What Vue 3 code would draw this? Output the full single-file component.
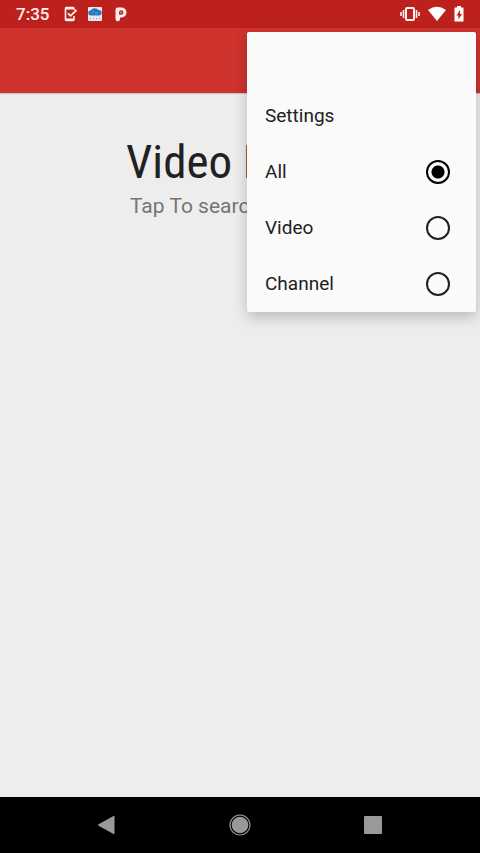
<script setup>
import { ref } from 'vue'

const filters = ['All', 'Video', 'Channel']
const selected = ref('All')
</script>

<template>
  <div class="screen">
    <header class="status">
      <div class="status-left">
        <time class="clock">7:35</time>
        <svg class="icon" viewBox="0 0 16 16" aria-hidden="true">
          <path d="M12 4V2.500q0-1-1-1H4.500q-1 0-1 1v11q0 1 1 1H11q1 0 1-1V10" fill="none" stroke="#fff1ed" stroke-width="1.600" />
          <path d="M3.500 2.300h8M3.500 13.600h8.500" stroke="#fff1ed" stroke-width="2.400" />
          <path d="M6 7.300l2.600 2.500L14.500 4" fill="none" stroke="#fff1ed" stroke-width="1.800" />
        </svg>
        <svg class="icon" viewBox="0 0 16 16" aria-hidden="true">
          <rect x="1" y="1" width="14" height="14" rx="1" fill="#eee8ea" />
          <path d="M4 9.500a2.500 2.500 0 0 1-.5-5A4.500 3.800 0 0 1 11.500 4a2.800 2.800 0 0 1 1 5.500z" fill="#2878bd" />
          <path d="M5 6h2m1 1h3" stroke="#62a5d8" />
          <path d="M3 12.500h1m2 0h1m2 0h1m2 0h1" stroke="#7ba6c6" />
        </svg>
        <svg class="icon" viewBox="0 0 16 16" aria-hidden="true">
          <path d="M3.500 7V3.500q0-2 2-2H9.500a5 5 0 0 1 0 10H8V13a2.200 2.200 0 0 1-4.500 0z" fill="#fff1ed" />
          <path d="M7 8.500V6.500a2.200 2.200 0 1 1 2.200 2.200z" fill="#bd211d" />
          <circle cx="9" cy="6.500" r=".700" fill="#fff1ed" />
        </svg>
      </div>
      <div class="status-right">
        <svg class="wide-icon" viewBox="0 0 20 16" aria-hidden="true">
          <rect x="6" y="2" width="8" height="12" rx="1" fill="none" stroke="#fff1ed" stroke-width="2" />
          <path d="M3.500 4v8M1 6v4M16.500 4v8M19 6v4" stroke="#fff1ed" stroke-width="1.600" />
        </svg>
        <svg class="wide-icon" viewBox="0 0 20 16" aria-hidden="true">
          <path d="M1 4Q10-2.500 19 4L10 15z" fill="#fff" />
        </svg>
        <svg class="battery" viewBox="0 0 10 16" aria-hidden="true">
          <path d="M3 0h4v1.500h2q.5 0 .5.500v13q0 .5-.5.500H1q-.5 0-.5-.5V2q0-.5.5-.5h2z" fill="#fff" />
          <path d="M6 4L2.500 9.500h2v4L8 8H6z" fill="#bd211d" />
        </svg>
      </div>
    </header>
    <div class="toolbar"></div>

    <main class="content">
      <h1>Video F</h1>
      <p>Tap To search</p>
    </main>

    <nav class="nav" aria-label="System navigation">
      <button type="button" aria-label="Back">
        <svg viewBox="0 0 24 24"><path d="M19.500 3.500v17q0 1-1 .5L3.500 12.700q-1-.7 0-1.400L18.500 3q1-.5 1 .5z" fill="#999" /></svg>
      </button>
      <button type="button" aria-label="Home">
        <svg viewBox="0 0 24 24"><circle cx="12" cy="12" r="10" fill="none" stroke="#999" stroke-width="1.200" /><circle cx="12" cy="12" r="8.300" fill="#999" /></svg>
      </button>
      <button type="button" aria-label="Recents">
        <svg viewBox="0 0 24 24"><rect x="3" y="3" width="18" height="18" rx="1" fill="#999" /></svg>
      </button>
    </nav>

    <div class="menu">
      <button class="item" type="button">Settings</button>
      <label v-for="name in filters" :key="name" class="item">
        <span>{{ name }}</span>
        <input v-model="selected" type="radio" name="filter" :value="name" />
      </label>
    </div>
  </div>
</template>

<style>
body {
  margin: 0;
}
</style>

<style scoped>
.screen {
  position: relative;
  display: flex;
  flex-direction: column;
  min-height: 100vh;
  overflow: hidden;
  background: #ededed;
  color: #212121;
  font-family: Roboto, sans-serif;
}
.status {
  display: flex;
  align-items: center;
  justify-content: space-between;
  height: 28px;
  padding: 0 16px;
  background: #bd211d;
}
.status-left,
.status-right {
  display: flex;
  align-items: center;
}
.status-left {
  gap: 9px;
}
.status-right {
  gap: 7px;
}
.clock {
  margin-right: 4px;
  color: #fff1ed;
  font-size: 17px;
  font-weight: 500;
  line-height: 28px;
}
.icon {
  width: 16px;
  height: 16px;
}
.wide-icon {
  width: 20px;
  height: 16px;
}
.battery {
  width: 10px;
  height: 16px;
}
.toolbar {
  height: 65px;
  background: #ce332e;
  box-shadow: 0 1px 1px rgba(0, 0, 0, 0.15);
}
.content {
  flex: 1;
  padding: 41px 0 0 126px;
  white-space: nowrap;
}
h1 {
  margin: 0;
  font-family: "Roboto Condensed", Roboto, sans-serif;
  font-size: 47px;
  font-weight: 400;
  line-height: 56px;
}
p {
  margin: 4px 0 0 4px;
  color: #757575;
  font-size: 21px;
  line-height: 24px;
}
.nav {
  display: flex;
  align-items: center;
  justify-content: center;
  gap: 109px;
  height: 56px;
  padding-right: 1px;
  background: #000;
}
.nav button {
  display: flex;
  padding: 0;
  border: 0;
  background: none;
}
.nav svg {
  width: 24px;
  height: 24px;
}
.menu {
  position: absolute;
  top: 32px;
  right: 4px;
  box-sizing: border-box;
  width: 229px;
  padding-top: 56px;
  border-radius: 2px;
  background: #fafafa;
  box-shadow: 0 5px 14px rgba(0, 0, 0, 0.22);
}
.item {
  display: flex;
  align-items: center;
  justify-content: space-between;
  box-sizing: border-box;
  width: 100%;
  height: 56px;
  padding: 0 26px 0 18px;
  border: 0;
  background: none;
  color: #212121;
  font-family: inherit;
  font-size: 19px;
  line-height: 26px;
}
.item input {
  appearance: none;
  box-sizing: border-box;
  width: 24px;
  height: 24px;
  margin: 0;
  border: 2px solid #212121;
  border-radius: 50%;
}
.item input:checked {
  border-color: #000;
  background: radial-gradient(circle, #000 6px, transparent 7px);
}
</style>
